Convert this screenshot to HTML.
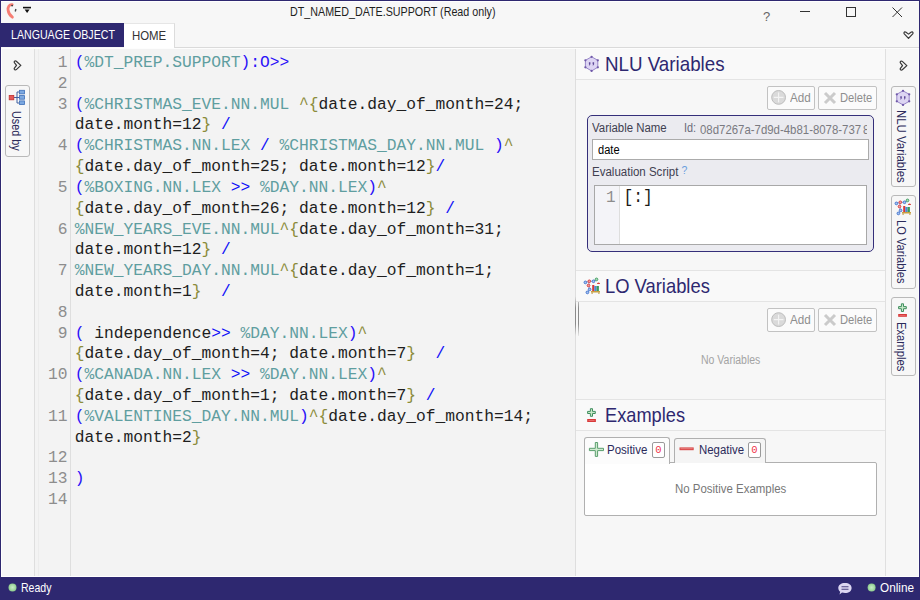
<!DOCTYPE html>
<html><head><meta charset="utf-8">
<style>
*{margin:0;padding:0;box-sizing:border-box}
html,body{width:920px;height:600px;overflow:hidden;background:#f7f7f7;font-family:"Liberation Sans",sans-serif;position:relative}
.a{position:absolute}
.t{position:absolute;white-space:pre;line-height:1;transform-origin:0 0}
svg{position:absolute;overflow:visible}
#code{position:absolute;left:74.7px;top:53px;font-family:"Liberation Mono",monospace;font-size:16.25px;line-height:20.81px;white-space:pre;color:#1e1e1e}
#gut{position:absolute;left:36px;top:53px;width:31.5px;text-align:right;font-family:"Liberation Mono",monospace;font-size:16.25px;line-height:20.81px;white-space:pre;color:#8d8d8d}
.p{color:#2a10f8}.i{color:#5f9ea0}.b{color:#8b8b3a}.s{color:#1010f8}
.btn{position:absolute;height:24px;border:1px solid #c2c2c2;border-radius:2px;background:#fbfbfb}
.vt{position:absolute;writing-mode:vertical-rl;white-space:pre;line-height:1;transform-origin:0 0}
.tab{position:absolute;border:1px solid #b9b9b9;border-radius:3px;background:#f7f7f7}
</style></head><body>
<!-- window border -->
<div class="a" style="left:0;top:0;width:920px;height:1px;background:#2e2870"></div>
<div class="a" style="left:0;top:0;width:1px;height:600px;background:#2e2870"></div>
<div class="a" style="left:919px;top:0;width:1px;height:600px;background:#2e2870"></div>
<!-- title bar icons -->
<svg style="left:0;top:0" width="40" height="23">
 <path d="M12.2 4.6 C9.4 4.2 7.6 7 8.1 10.2 C8.5 13.2 10.3 15.6 12.4 17.2" fill="none" stroke="#f77d73" stroke-width="2.8" stroke-linecap="round"/>
 <circle cx="12.1" cy="5.6" r="0.9" fill="#3a3a3a"/>
 <path d="M15.2 8.8 L16.6 9.3 L15.9 11.7 L14.6 11.3 Z" fill="#4a4a4a"/>
 <rect x="23" y="6.8" width="8" height="1.6" fill="#111"/>
 <path d="M24.6 9.6 H29.6 L27.1 13 Z" fill="#111"/>
</svg>
<div class="t" id="title" style="left:290.09px;top:4.99px;font-family:'Liberation Sans',sans-serif;font-size:13px;color:#1e1e1e;transform:scaleX(0.8245)">DT_NAMED_DATE.SUPPORT (Read only)</div>
<div class="t" style="left:763px;top:9.5px;font-size:13px;color:#666">?</div>
<svg style="left:0;top:0" width="920" height="50">
 <rect x="800" y="11" width="10" height="1" fill="#333"/>
 <rect x="846.5" y="7.5" width="9" height="9" fill="none" stroke="#333" stroke-width="1"/>
 <path d="M892.5 7.5 L902 17 M902 7.5 L892.5 17" stroke="#333" stroke-width="1"/>
 <path transform="translate(908.5 35.2) scale(1.08)" d="M0 -1 L-2.3 -2.8 Q-3.5 -3.6 -4.1 -2.5 Q-4.4 -1.8 -3.9 -1.2 L0 3 L3.9 -1.2 Q4.4 -1.8 4.1 -2.5 Q3.5 -3.6 2.3 -2.8 Z" fill="none" stroke="#3a3a3a" stroke-width="1.15" stroke-linejoin="round"/>
</svg>
<!-- tabs -->
<div class="a" style="left:1px;top:23px;width:123px;height:24px;background:#2e2870"></div>
<div class="t" id="tlo" style="left:10.85px;top:27.99px;font-family:'Liberation Sans',sans-serif;font-size:13px;color:#ffffff;transform:scaleX(0.8171)">LANGUAGE OBJECT</div>
<div class="a" style="left:124px;top:23px;width:51px;height:25px;background:#fff;border-top:1px solid #e6e6e6;border-right:1px solid #dcdcdc"></div>
<div class="t" id="thome" style="left:132.25px;top:28.79px;font-family:'Liberation Sans',sans-serif;font-size:13px;color:#333333;transform:scaleX(0.8775)">HOME</div>
<div class="a" style="left:175px;top:47px;width:744px;height:1px;background:#dadada"></div>
<!-- main bg -->
<div class="a" style="left:1px;top:48px;width:918px;height:528px;background:#f3f3f3;border-top:1px solid #fdfdfd"></div>
<div class="a" style="left:1px;top:1px;width:918px;height:1px;background:#fff"></div>
<div class="a" style="left:1px;top:48px;width:33px;height:528px;background:#f6f6f6;border-left:1px solid #fff"></div>
<div class="a" style="left:886px;top:48px;width:33px;height:528px;background:#f7f7f7;border-right:1px solid #fcfcfc"></div>
<div class="a" style="left:34px;top:48px;width:1px;height:528px;background:#dedede"></div>
<div class="a" style="left:38px;top:48px;width:1px;height:528px;background:#ececec"></div>
<div class="a" style="left:70px;top:48px;width:1px;height:528px;background:#dedede"></div>
<!-- left sidebar -->
<svg style="left:0;top:0" width="40" height="160">
 <path transform="translate(17.6 65.4) rotate(-90) scale(1.08)" d="M0 -1 L-2.3 -2.8 Q-3.5 -3.6 -4.1 -2.5 Q-4.4 -1.8 -3.9 -1.2 L0 3 L3.9 -1.2 Q4.4 -1.8 4.1 -2.5 Q3.5 -3.6 2.3 -2.8 Z" fill="none" stroke="#3a3a3a" stroke-width="1.15" stroke-linejoin="round"/>
</svg>
<div class="tab" style="left:4.5px;top:85px;width:25px;height:72px"></div>
<svg style="left:0;top:0" width="40" height="160">
 <path d="M14 97.5 H17 M17 92 V103 M17 92 H19.5 M17 97.5 H19.5 M17 103 H19.5" stroke="#3f5fa0" stroke-width="1" fill="none"/>
 <rect x="9.2" y="95.4" width="4.6" height="4.4" fill="#e45a5a" stroke="#c03030" stroke-width="0.8"/>
 <rect x="19.5" y="90.3" width="5" height="3.6" fill="#7ca8e0" stroke="#3d6fb8" stroke-width="0.8"/>
 <rect x="19.5" y="95.6" width="5" height="3.6" fill="#7ca8e0" stroke="#3d6fb8" stroke-width="0.8"/>
 <rect x="19.5" y="100.9" width="5" height="3.6" fill="#7ca8e0" stroke="#3d6fb8" stroke-width="0.8"/>
</svg>
<div class="vt" id="usedby" style="left:9.55px;top:110.91px;font-size:13px;color:#2b2a5a;transform:scaleY(0.8308)">Used by</div>
<div id="gut">1
2
3

4

5

6

7

8
9

10

11

12
13
14</div>
<div id="code"><span class="p">(</span><span class="i">%DT_PREP.SUPPORT</span><span class="p">):O&gt;&gt;</span>

<span class="p">(</span><span class="i">%CHRISTMAS_EVE.NN.MUL </span><span class="b">^{</span>date.day_of_month=24;
date.month=12<span class="b">}</span> <span class="s">/</span>
<span class="p">(</span><span class="i">%CHRISTMAS.NN.LEX </span><span class="s">/</span><span class="i"> %CHRISTMAS_DAY.NN.MUL </span><span class="p">)</span><span class="b">^</span>
<span class="b">{</span>date.day_of_month=25; date.month=12<span class="b">}</span><span class="s">/</span>
<span class="p">(</span><span class="i">%BOXING.NN.LEX </span><span class="s">&gt;&gt;</span><span class="i"> %DAY.NN.LEX</span><span class="p">)</span><span class="b">^</span>
<span class="b">{</span>date.day_of_month=26; date.month=12<span class="b">}</span> <span class="s">/</span>
<span class="i">%NEW_YEARS_EVE.NN.MUL</span><span class="b">^{</span>date.day_of_month=31;
date.month=12<span class="b">}</span> <span class="s">/</span>
<span class="i">%NEW_YEARS_DAY.NN.MUL</span><span class="b">^{</span>date.day_of_month=1;
date.month=1<span class="b">}</span>  <span class="s">/</span>

<span class="p">(</span> independence<span class="s">&gt;&gt;</span><span class="i"> %DAY.NN.LEX</span><span class="p">)</span><span class="b">^</span>
<span class="b">{</span>date.day_of_month=4; date.month=7<span class="b">}</span>  <span class="s">/</span>
<span class="p">(</span><span class="i">%CANADA.NN.LEX </span><span class="s">&gt;&gt;</span><span class="i"> %DAY.NN.LEX</span><span class="p">)</span><span class="b">^</span>
<span class="b">{</span>date.day_of_month=1; date.month=7<span class="b">}</span> <span class="s">/</span>
<span class="p">(</span><span class="i">%VALENTINES_DAY.NN.MUL</span><span class="p">)</span><span class="b">^{</span>date.day_of_month=14;
date.month=2<span class="b">}</span>

<span class="p">)</span>
</div>
<!-- splitter -->
<div class="a" style="left:575px;top:48px;width:1px;height:528px;background:#dedede"></div>
<div class="a" style="left:575px;top:296px;width:1px;height:40px;background:linear-gradient(#e0e0e0,#8a8a8a 30%,#8a8a8a 70%,#e0e0e0)"></div>
<div class="a" style="left:578px;top:296px;width:1px;height:40px;background:linear-gradient(#e8e8e8,#8a8a8a 30%,#8a8a8a 70%,#e8e8e8)"></div>
<!-- right panel bg -->
<div class="a" style="left:576px;top:48px;width:309px;height:528px;background:#f7f7f7"></div>
<div class="a" style="left:575px;top:296px;width:1px;height:40px;background:linear-gradient(#e0e0e0,#8a8a8a 30%,#8a8a8a 70%,#e0e0e0)"></div>
<div class="a" style="left:578px;top:296px;width:1px;height:40px;background:linear-gradient(#e8e8e8,#8a8a8a 30%,#8a8a8a 70%,#e8e8e8)"></div>
<div class="a" style="left:885px;top:48px;width:1px;height:528px;background:#e0e0e0"></div>
<!-- NLU section -->
<div class="a" style="left:576px;top:48px;width:309px;height:32px;background:#f9f9f9;border-bottom:1px solid #e4e4e4"></div>
<svg style="left:0;top:0" width="620" height="80">
 <g transform="translate(591.6 63.8)"><path d="M0.0 -7.0 6.2 -3.5 6.2 3.5 0.0 7.1 -6.2 3.5 -6.2 -3.5 Z" fill="#ddd5f3" stroke="#8e7cc4" stroke-width="0.9"/><circle cx="0" cy="-7.0" r="1.15" fill="#6f58a8"/><circle cx="6.2" cy="-3.5" r="1.15" fill="#6f58a8"/><circle cx="6.2" cy="3.5" r="1.15" fill="#6f58a8"/><circle cx="0" cy="7.1" r="1.15" fill="#6f58a8"/><circle cx="-6.2" cy="3.5" r="1.15" fill="#6f58a8"/><circle cx="-6.2" cy="-3.5" r="1.15" fill="#6f58a8"/><path d="M-2.7 -1.6 h1.5 v2.1 l-0.9 1.3 h-0.6 l0.45 -1.3 h-0.45 Z M1.0 -1.6 h1.5 v2.1 l-0.9 1.3 h-0.6 l0.45 -1.3 h-0.45 Z" fill="#5e4898"/></g>
</svg>
<div class="t" id="hnlu" style="left:604.52px;top:53.12px;font-family:'Liberation Sans',sans-serif;font-size:21px;color:#2e2870;transform:scaleX(0.8933)">NLU Variables</div>
<div class="btn" style="left:767px;top:86px;width:47.5px"></div>
<div class="btn" style="left:818px;top:86px;width:58.5px"></div>
<svg style="left:0;top:0" width="900" height="120">
 <circle cx="778.6" cy="97.4" r="6.9" fill="#dadada" stroke="#bdbdbd" stroke-width="1"/>
 <path d="M778.6 92.6 V102.2 M773.8 97.4 H783.4" stroke="#f4f4f4" stroke-width="1.1"/>
 <path d="M825 93 L835 103 M835 93 L825 103" stroke="#cbcbcb" stroke-width="3"/>
</svg>
<div class="t" id="add1" style="left:789.76px;top:92.04px;font-family:'Liberation Sans',sans-serif;font-size:12px;color:#8e8e8e;transform:scaleX(0.9726)">Add</div>
<div class="t" id="del1" style="left:840.22px;top:92.04px;font-family:'Liberation Sans',sans-serif;font-size:12px;color:#8e8e8e;transform:scaleX(0.9317)">Delete</div>
<!-- NLU box -->
<div class="a" style="left:587px;top:115px;width:287px;height:137px;border:1.5px solid #352f7a;border-radius:5px;background:#ebebf0"></div>
<div class="t" id="varname" style="left:592.17px;top:121.54px;font-family:'Liberation Sans',sans-serif;font-size:12px;color:#404050;transform:scaleX(0.9520)">Variable Name</div>
<div class="t" id="idl" style="left:684.02px;top:121.54px;font-family:'Liberation Sans',sans-serif;font-size:12px;color:#6a6a7a;transform:scaleX(0.9071)">Id:</div>
<div class="t" id="idv" style="left:700.41px;top:122.99px;font-family:'Liberation Sans',sans-serif;font-size:13px;color:#7a7a80;transform:scaleX(0.8777)">08d7267a-7d9d-4b81-8078-737</div>
<div class="a" style="left:862.6px;top:120px;width:4.6px;height:18px;overflow:hidden"><div class="t" id="idv8" style="left:0.8px;top:3.0px;font-size:13px;color:#7a7a80;transform:scaleX(0.88)">8</div></div>
<div class="a" style="left:592px;top:139px;width:277px;height:21px;background:#fff;border:1px solid #ababab"></div>
<div class="t" id="date" style="left:597.54px;top:144.04px;font-family:'Liberation Sans',sans-serif;font-size:12px;color:#000000;transform:scaleX(0.9217)">date</div>
<div class="t" id="evals" style="left:592.21px;top:165.74px;font-family:'Liberation Sans',sans-serif;font-size:12px;color:#404050;transform:scaleX(0.9591)">Evaluation Script</div>
<div class="t" style="left:681.4px;top:164.6px;font-size:10.5px;color:#6a9ede">?</div>
<div class="a" style="left:594px;top:185px;width:273px;height:60px;background:#fff;border:1px solid #a8a8a8"></div>
<div class="a" style="left:595px;top:186px;width:25px;height:58px;background:#f4f4f8;border-right:1px solid #dedede"></div>
<div class="t" id="one" style="left:606px;top:190px;font-family:'Liberation Mono',monospace;font-size:16px;color:#8d8d8d">1</div>
<div class="t" id="brk" style="left:623.4px;top:188.2px;font-family:'Liberation Mono',monospace;font-size:16.25px;color:#1a1a1a;transform:scaleY(1.15)">[:]</div>
<!-- LO section -->
<div class="a" style="left:576px;top:270px;width:309px;height:32px;background:#f9f9f9;border-top:1px solid #e4e4e4;border-bottom:1px solid #e4e4e4"></div>
<svg style="left:0;top:0" width="620" height="300">
 <path d="M585.4 282.4 L589.3 281.3 L593.5 281.3 L596.5 279.4 M589.3 281.3 L588.5 285.5 L589.6 289.4 L587.4 292.4" stroke="#6a8ad0" stroke-width="0.7" fill="none"/>
 <g stroke-width="0.9"><circle cx="585.4" cy="282.4" r="1.35" fill="#a8c4f0" stroke="#3d6fcc"/><circle cx="589.3" cy="281.3" r="1.35" fill="#f0a0a0" stroke="#d83838"/><circle cx="593.5" cy="281.3" r="1.35" fill="#a8c4f0" stroke="#3d6fcc"/>
 <circle cx="596.5" cy="279.4" r="1.35" fill="#a8dcb8" stroke="#3c9a5c"/><circle cx="588.5" cy="285.5" r="1.35" fill="#f0a0a0" stroke="#d83838"/><circle cx="589.6" cy="289.4" r="1.35" fill="#a8c4f0" stroke="#3d6fcc"/>
 <circle cx="587.4" cy="292.4" r="1.35" fill="#a8c4f0" stroke="#3d6fcc"/></g><path d="M596.9 284 a1.6 1.6 0 0 1 3.2 0 Z" fill="#d83838"/>
 <rect x="592.2" y="285" width="2.1" height="6" fill="#d83838"/><rect x="594.3" y="286" width="2.2" height="5" fill="#4f86d8"/><rect x="596.5" y="286" width="2.4" height="5" fill="#3c9a5c"/>
 <rect x="591" y="291" width="9" height="1.5" fill="#c9a040"/><rect x="591.5" y="292.5" width="1.2" height="1.3" fill="#b08a30"/><rect x="598.3" y="292.5" width="1.2" height="1.3" fill="#b08a30"/>
</svg>
<div class="t" id="hlo" style="left:604.51px;top:275.12px;font-family:'Liberation Sans',sans-serif;font-size:21px;color:#2e2870;transform:scaleX(0.8748)">LO Variables</div>
<div class="btn" style="left:767px;top:308px;width:47.5px"></div>
<div class="btn" style="left:818px;top:308px;width:58.5px"></div>
<svg style="left:0;top:0" width="900" height="340">
 <circle cx="778.6" cy="319.6" r="6.9" fill="#dadada" stroke="#bdbdbd" stroke-width="1"/>
 <path d="M778.6 314.8 V324.4 M773.8 319.6 H783.4" stroke="#f4f4f4" stroke-width="1.1"/>
 <path d="M825 315 L835 325 M835 315 L825 325" stroke="#cbcbcb" stroke-width="3"/>
</svg>
<div class="t" id="add2" style="left:789.76px;top:314.04px;font-family:'Liberation Sans',sans-serif;font-size:12px;color:#8e8e8e;transform:scaleX(0.9726)">Add</div>
<div class="t" id="del2" style="left:840.22px;top:314.04px;font-family:'Liberation Sans',sans-serif;font-size:12px;color:#8e8e8e;transform:scaleX(0.9317)">Delete</div>
<div class="t" id="novars" style="left:700.81px;top:353.84px;font-family:'Liberation Sans',sans-serif;font-size:12px;color:#a4a4a4;transform:scaleX(0.8753)">No Variables</div>
<!-- Examples -->
<div class="a" style="left:576px;top:399px;width:309px;height:32px;background:#f9f9f9;border-top:1px solid #e4e4e4;border-bottom:1px solid #e4e4e4"></div>
<svg style="left:0;top:0" width="620" height="430">
 <path d="M590.4 408.7 H592.5 V411.4 H595.3 V413.5 H592.5 V416.3 H590.4 V413.5 H587.6 V411.4 H590.4 Z" fill="#c8e8c8" stroke="#3f8e5e" stroke-width="1"/>
 <rect x="587.2" y="419" width="8.7" height="3" fill="#d83a3a"/><rect x="588.5" y="420.2" width="6" height="0.7" fill="#f08080"/>
</svg>
<div class="t" id="hex" style="left:604.86px;top:403.82px;font-family:'Liberation Sans',sans-serif;font-size:21px;color:#2e2870;transform:scaleX(0.8676)">Examples</div>
<div class="a" style="left:584px;top:462px;width:292.5px;height:54px;background:#fff;border:1px solid #b0b0b0;border-radius:2px"></div>
<div class="a" style="left:584px;top:436.5px;width:85.5px;height:27px;background:#fcfcfc;border:1px solid #b0b0b0;border-bottom:none;border-radius:3px 3px 0 0"></div>
<div class="a" style="left:674px;top:437.5px;width:91.5px;height:25px;background:#f5f5f5;border:1px solid #b0b0b0;border-bottom:none;border-radius:3px 3px 0 0"></div>
<svg style="left:0;top:0" width="800" height="470">
 <path d="M595.3 442.5 H597.6 V448.3 H603.5 V450.6 H597.6 V456.4 H595.3 V450.6 H589.4 V448.3 H595.3 Z" fill="#cfeacf" stroke="#5a9e6e" stroke-width="1"/>
 <rect x="679.5" y="447.4" width="14.2" height="2.8" fill="#d84848"/><rect x="680.5" y="448.5" width="12.2" height="0.6" fill="#f4a0a0"/>
</svg>
<div class="t" id="pos" style="left:607.22px;top:444.04px;font-family:'Liberation Sans',sans-serif;font-size:12px;color:#2b2a5a;transform:scaleX(0.9601)">Positive</div>
<div class="a" style="left:652px;top:442px;width:12.5px;height:15.5px;border:1px solid #9a9a9a;border-radius:2px;background:#fff"></div>
<div class="t" style="left:655.3px;top:445.2px;font-family:'Liberation Mono',monospace;font-size:10.5px;color:#f03048">0</div>
<div class="t" id="neg" style="left:698.57px;top:444.04px;font-family:'Liberation Sans',sans-serif;font-size:12px;color:#2b2a5a;transform:scaleX(0.9506)">Negative</div>
<div class="a" style="left:748px;top:442px;width:12.5px;height:15.5px;border:1px solid #9a9a9a;border-radius:2px;background:#fff"></div>
<div class="t" style="left:751.2px;top:445.2px;font-family:'Liberation Mono',monospace;font-size:10.5px;color:#f03048">0</div>
<div class="t" id="nopos" style="left:674.80px;top:482.54px;font-family:'Liberation Sans',sans-serif;font-size:12px;color:#777777;transform:scaleX(0.9539)">No Positive Examples</div>
<!-- right sidebar -->
<svg style="left:0;top:0" width="920" height="80">
 <path transform="translate(903.6 65.6) rotate(-90) scale(1.08)" d="M0 -1 L-2.3 -2.8 Q-3.5 -3.6 -4.1 -2.5 Q-4.4 -1.8 -3.9 -1.2 L0 3 L3.9 -1.2 Q4.4 -1.8 4.1 -2.5 Q3.5 -3.6 2.3 -2.8 Z" fill="none" stroke="#3a3a3a" stroke-width="1.15" stroke-linejoin="round"/>
</svg>
<div class="tab" style="left:890.5px;top:85.5px;width:25px;height:101px"></div>
<div class="tab" style="left:890.5px;top:195px;width:25px;height:93.5px"></div>
<div class="tab" style="left:890.5px;top:297px;width:25px;height:79px"></div>
<svg style="left:0;top:0" width="920" height="330">
 <g transform="translate(903 97.8)"><path d="M0.0 -7.0 6.2 -3.5 6.2 3.5 0.0 7.1 -6.2 3.5 -6.2 -3.5 Z" fill="#ddd5f3" stroke="#8e7cc4" stroke-width="0.9"/><circle cx="0" cy="-7.0" r="1.15" fill="#6f58a8"/><circle cx="6.2" cy="-3.5" r="1.15" fill="#6f58a8"/><circle cx="6.2" cy="3.5" r="1.15" fill="#6f58a8"/><circle cx="0" cy="7.1" r="1.15" fill="#6f58a8"/><circle cx="-6.2" cy="3.5" r="1.15" fill="#6f58a8"/><circle cx="-6.2" cy="-3.5" r="1.15" fill="#6f58a8"/><path d="M-2.7 -1.6 h1.5 v2.1 l-0.9 1.3 h-0.6 l0.45 -1.3 h-0.45 Z M1.0 -1.6 h1.5 v2.1 l-0.9 1.3 h-0.6 l0.45 -1.3 h-0.45 Z" fill="#5e4898"/></g>
 <g transform="translate(311,-79)">
 <path d="M585.4 282.4 L589.3 281.3 L593.5 281.3 L596.5 279.4 M589.3 281.3 L588.5 285.5 L589.6 289.4 L587.4 292.4" stroke="#6a8ad0" stroke-width="0.7" fill="none"/>
 <g stroke-width="0.9"><circle cx="585.4" cy="282.4" r="1.35" fill="#a8c4f0" stroke="#3d6fcc"/><circle cx="589.3" cy="281.3" r="1.35" fill="#f0a0a0" stroke="#d83838"/><circle cx="593.5" cy="281.3" r="1.35" fill="#a8c4f0" stroke="#3d6fcc"/>
 <circle cx="596.5" cy="279.4" r="1.35" fill="#a8dcb8" stroke="#3c9a5c"/><circle cx="588.5" cy="285.5" r="1.35" fill="#f0a0a0" stroke="#d83838"/><circle cx="589.6" cy="289.4" r="1.35" fill="#a8c4f0" stroke="#3d6fcc"/>
 <circle cx="587.4" cy="292.4" r="1.35" fill="#a8c4f0" stroke="#3d6fcc"/></g><path d="M596.9 284 a1.6 1.6 0 0 1 3.2 0 Z" fill="#d83838"/>
 <rect x="592.2" y="285" width="2.1" height="6" fill="#d83838"/><rect x="594.3" y="286" width="2.2" height="5" fill="#4f86d8"/><rect x="596.5" y="286" width="2.4" height="5" fill="#3c9a5c"/>
 <rect x="591" y="291" width="9" height="1.5" fill="#c9a040"/><rect x="591.5" y="292.5" width="1.2" height="1.3" fill="#b08a30"/><rect x="598.3" y="292.5" width="1.2" height="1.3" fill="#b08a30"/>
 </g>
 <path d="M901.4 303.8 H903.5 V306.6 H906.3 V308.7 H903.5 V311.5 H901.4 V308.7 H898.6 V306.6 H901.4 Z" fill="#c8e8c8" stroke="#3f8e5e" stroke-width="1"/>
 <rect x="898.2" y="314" width="8.7" height="2.8" fill="#d83a3a"/><rect x="899.5" y="315.1" width="6" height="0.6" fill="#f08080"/>
</svg>
<div class="vt" id="vnlu" style="left:895.40px;top:109.68px;font-size:13px;color:#2b2a5a;transform:scaleY(0.8782)">NLU Variables</div>
<div class="vt" id="vlo" style="left:895.40px;top:220.06px;font-size:13px;color:#2b2a5a;transform:scaleY(0.8568)">LO Variables</div>
<div class="vt" id="vex" style="left:894.60px;top:322.12px;font-size:13px;color:#2b2a5a;transform:scaleY(0.8645)">Examples</div>
<div class="a" style="left:1px;top:48px;width:918px;height:1px;background:#fdfdfd"></div>
<!-- status -->
<div class="a" style="left:1px;top:576px;width:918px;height:1px;background:#fff"></div>
<div class="a" style="left:0;top:577px;width:920px;height:23px;background:#2e2870"></div>
<svg style="left:0;top:0" width="920" height="600">
 <circle cx="12.5" cy="587.4" r="4" fill="url(#gdot)"/>
 <circle cx="871.6" cy="587.6" r="4" fill="url(#gdot)"/><defs><radialGradient id="gdot"><stop offset="0" stop-color="#c8ecc8"/><stop offset="0.6" stop-color="#a8dca8"/><stop offset="1" stop-color="#8cc88c"/></radialGradient></defs>
 <path d="M845 583 C849 583 851.6 585 851.6 588 C851.6 591 849 593 845 593 C844 593 843 592.8 842 592.5 L839.5 594.5 L840.2 591.8 C838.9 590.8 838.3 589.5 838.3 588 C838.3 585 841 583 845 583 Z" fill="#dcd6f2"/>
 <path d="M841.5 586.8 H848.5 M841.5 589.3 H848.5" stroke="#4a4280" stroke-width="1.1"/>
</svg>
<div class="t" id="ready" style="left:21.17px;top:580.89px;font-family:'Liberation Sans',sans-serif;font-size:13px;color:#ffffff;transform:scaleX(0.8112)">Ready</div>
<div class="t" id="online" style="left:880.00px;top:580.59px;font-family:'Liberation Sans',sans-serif;font-size:13px;color:#ffffff;transform:scaleX(0.9034)">Online</div>
</body></html>
